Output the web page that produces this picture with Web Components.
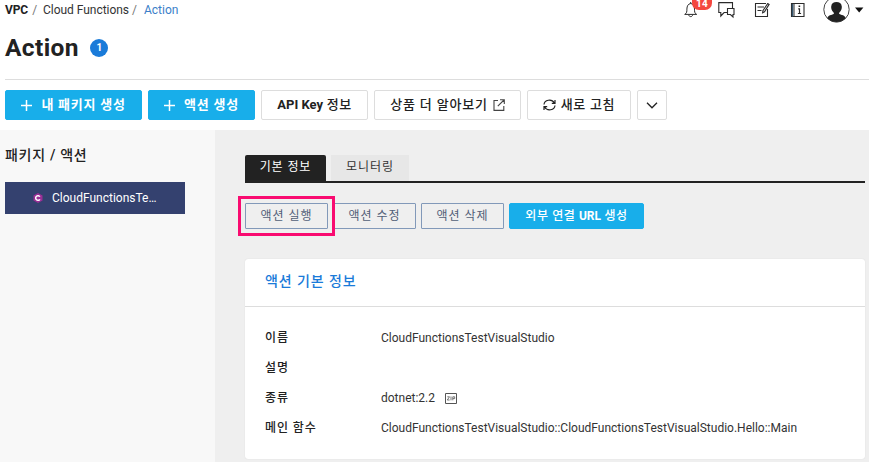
<!DOCTYPE html>
<html lang="ko">
<head>
<meta charset="utf-8">
<title>Action</title>
<style>
html,body{margin:0;height:100%;overflow:hidden;background:#fff}
body{font-family:Roboto,"Noto Sans CJK KR",sans-serif;font-size:12px;color:#222}
</style>
</head>
<body>
<console-page></console-page>
<script>
const define = (name, html) => {
  const tpl = document.createElement('template');
  tpl.innerHTML = html;
  customElements.define(name, class extends HTMLElement {
    constructor() {
      super();
      this.attachShadow({mode: 'open'}).append(tpl.content.cloneNode(true));
    }
  });
};

define('crumb-trail', `
<style>
:host{display:flex;align-items:center;height:20px;line-height:20px;white-space:pre;font-size:12px}
b{letter-spacing:-.1px}
i{font-style:normal;color:#777;margin:0 6px 0 4px}
.c{letter-spacing:-.04px;color:#333}
.c + i{margin-left:3px;margin-right:7px}
.a{color:#3b7fc9;letter-spacing:0}
</style><b>VPC</b><i>/</i><span class="c">Cloud Functions</span><i>/</i><span class="a">Action</span>`);

define('header-tools', `
<style>
:host{display:block;position:relative;width:185px;height:26px}
svg{display:block}
.n{position:absolute;left:8px;top:0;width:20px;height:10px;border-radius:0 0 7px 7px;background:#f4473f;color:#fff;font-weight:700;font-size:10px;line-height:8px;text-align:center;letter-spacing:.3px}
</style>
<svg width="185" height="26" fill="none" stroke="#2b2b2b" stroke-width="1.1">
<path d="M.700 14.400c2.200-1 2.200-3 2.200-5.300C2.900 6 4.200 3.800 6.700 3.500c2.500.3 3.800 2.500 3.800 5.600 0 2.300 0 4.300 2.200 5.300zM4.700 14.800c.3 2.400 3.700 2.400 4 0M6.700 3.500V2" stroke-width="1"/>
<path d="M48.500 8V2.600H34.800v9.900h2V16l3.300-3.500H43M43.500 8.500H50v6h-1V17l-2.600-2.500h-2.900z"/>
<path d="M82 3.500H71.500v13h12V9M73.500 7h6.500M73.500 10.500h4"/>
<path d="M83.600 3.600l1.500.8-4.600 7.400-1.900 1 .3-2.200z"/>
<path d="M107.500 3.500h12.500v13h-12.500z"/><path d="M110 3.500v13" stroke-width="1"/><path d="M108.500 4v12.500" stroke="#36566f" stroke-width="1.400"/>
<path d="M115.500 8.300v5.200M114.200 8.800h1.300M113.900 13.500h3.200" stroke-width="1.200"/><path d="M114.600 5.500h1.600v1.500h-1.600z" fill="#222" stroke="none"/>
<circle cx="152.500" cy="9.500" r="12.700" stroke="#444" stroke-width="1" fill="#fff"/>
<path d="M143.300 18.300c.5-3 4.500-3.200 6.400-4.200.4-.6.200-1.200-.3-1.800-1.700-1.800-2.400-3.800-2.200-5.900.3-3 2.500-4.300 5.300-4.300s5 1.300 5.300 4.300c.2 2.100-.5 4.100-2.200 5.900-.5.6-.7 1.200-.3 1.800 1.900 1 5.900 1.200 6.400 4.200-4.500 4.900-13.900 4.900-18.400 0z" fill="#222" stroke="none"/>
<path d="M171 7.500h8.400l-4.200 5z" fill="#111" stroke="none"/>
</svg><span class="n">14</span>`);

define('page-title', `
<style>
:host{display:flex;align-items:center;height:59px;border-bottom:1px solid #ddd;box-sizing:border-box}
h1{margin:0;font-size:24.5px;font-weight:700;line-height:30px;letter-spacing:.4px;padding-bottom:4px}
span{width:18px;height:18px;border-radius:50%;background:#1a7bd9;color:#fff;font:700 10px/18px Roboto,sans-serif;text-align:center;margin:0 0 4px 11.5px}
</style><h1><slot></slot></h1><span>1</span>`);

define('ui-button', `
<style>
:host{display:flex;align-items:center;justify-content:center;box-sizing:border-box;width:var(--w);height:30px;border:1px solid #ddd;border-radius:2px;background:#fff;color:#222;font-size:13px;font-weight:500;white-space:pre;letter-spacing:var(--ls,0);line-height:18px;flex:none}
:host([primary]){background:#18aeea;border-color:#18aeea;color:#fff;font-weight:700}
:host([small]){height:26px;font-size:12px;font-weight:500}
:host([line]){background:transparent;border-color:#8299b9;color:#526078;font-weight:400;border-radius:1px}
::slotted(svg){flex:none}
</style><slot></slot>`);

define('tab-bar', `
<style>
:host{display:flex;gap:5px;height:28px;box-sizing:border-box;border-bottom:2px solid #222;line-height:25px;font-size:12px;text-align:center}
span{width:78px;background:#e7e7e7;color:#333;letter-spacing:1px}
.on{width:81px;background:#222;color:#fff;border-radius:2px 2px 0 0;letter-spacing:.9px}
</style><span class="on">기본 정보</span><span>모니터링</span>`);

define('side-panel', `
<style>
:host{display:block;width:215px;box-sizing:border-box;padding:15px 5px;background:#f8f8f8;flex:none}
h2{margin:0 0 17px;font-size:14px;line-height:20px;font-weight:500;letter-spacing:.7px}
div{width:180px;height:32px;box-sizing:border-box;padding-left:28px;background:#34416f;color:#fff;display:flex;align-items:center;font-size:12px;gap:9px}
</style><h2>패키지 / 액션</h2>
<div><svg width="10" height="10" viewBox="0 0 10 10"><path d="M5 0l4.500 2.500v5L5 10 .500 7.500v-5z" fill="#9b2f96"/><path d="M6.900 3.700A2.300 2.300 0 1 0 6.900 6.300" fill="none" stroke="#fff" stroke-width="1.500"/></svg><span>CloudFunctionsTe…</span></div>`);

define('info-row', `
<style>
:host{display:flex;height:30px;align-items:center;line-height:20px}
.l{width:116px;font-size:12px;font-weight:500;letter-spacing:.9px}
.v{display:flex;align-items:center;gap:10px;color:#333}
</style><span class="l"><slot name="label"></slot></span><span class="v"><slot></slot></span>`);

define('info-card', `
<style>
:host{display:block;height:200px;box-sizing:border-box;background:#fff;border-radius:3px;box-shadow:0 0 1px #ccc}
h3{margin:0;padding:0 20px;height:48px;box-sizing:border-box;border-bottom:1px solid #ddd;color:#1a7bd9;font-size:14px;font-weight:500;line-height:45px;letter-spacing:.9px}
section{padding:16px 20px}
</style><h3><slot name="title"></slot></h3><section><slot></slot></section>`);

define('console-page', `
<style>
:host{display:flex;flex-direction:column;width:869px;height:462px;overflow:hidden}
header{height:130px;flex:none;padding-left:5px;box-sizing:border-box}
.top{display:flex;justify-content:space-between;height:21px}
.bar{display:flex;padding-top:10px}
.body{display:flex;flex:1}
main{flex:1;background:#efefef;padding:25px 4px 0 30px}
.acts{display:flex;gap:5px;margin:20px 0 30px;position:relative}
.mark{position:absolute;left:-7px;top:-7px;width:97px;height:40px;box-sizing:border-box;border:3px solid #f90b70}
</style>
<header>
<div class="top"><crumb-trail></crumb-trail><header-tools></header-tools></div>
<page-title>Action</page-title>
<div class="bar">
<ui-button primary style="--w:137px;margin-right:6px;--ls:.75px"><svg width="11" height="11" style="margin-right:9px"><path d="M5.500 0v11M0 5.500h11" stroke="#fff" stroke-width="1.500"/></svg>내 패키지 생성</ui-button>
<ui-button primary style="--w:107px;margin-right:6px;--ls:.75px"><svg width="11" height="11" style="margin-right:9px"><path d="M5.500 0v11M0 5.500h11" stroke="#fff" stroke-width="1.500"/></svg>액션 생성</ui-button>
<ui-button style="--w:107px;margin-right:6px;--ls:.5px"><b style="letter-spacing:0">API Key</b> 정보</ui-button>
<ui-button style="--w:147px;margin-right:6px;--ls:.8px">상품 더 알아보기<svg width="12" height="12" style="margin-left:5px" fill="none" stroke="#444" stroke-width="1.100"><path d="M5 1.500H1v9.900h9.800V7M7 .700h4.300V5M11 1L4.800 7.200"/></svg></ui-button>
<ui-button style="--w:104px;margin-right:6px;--ls:.7px"><svg width="13" height="12" style="margin-right:5px" fill="none" stroke="#222" stroke-width="1.200"><path d="M1 5.500C1.500 1 8.500-.800 11.400 4M12 1v3.300H8.800M12 6.500c-.5 4.500-7.500 6.300-10.400 1.500M1 11V7.700h3.200"/></svg>새로 고침</ui-button>
<ui-button style="--w:30px"><svg width="12" height="7" fill="none" stroke="#222" stroke-width="1.300"><path d="M1 .800l5 5 5-5"/></svg></ui-button>
</div>
</header>
<div class="body">
<side-panel></side-panel>
<main>
<tab-bar></tab-bar>
<div class="acts">
<ui-button small line style="--w:83px;--ls:1px">액션 실행</ui-button>
<ui-button small line style="--w:83px;--ls:1px">액션 수정</ui-button>
<ui-button small line style="--w:83px;--ls:1px">액션 삭제</ui-button>
<ui-button small primary style="--w:135px;--ls:.6px"><span>외부 연결 <b style="letter-spacing:-.1px">URL</b> 생성</span></ui-button>
<span class="mark"></span>
</div>
<info-card><span slot="title">액션 기본 정보</span>
<info-row><span slot="label">이름</span>CloudFunctionsTestVisualStudio</info-row>
<info-row><span slot="label">설명</span></info-row>
<info-row><span slot="label">종류</span>dotnet:2.2<svg width="12" height="11" fill="none" stroke="#555" stroke-width="1"><path d="M.500.500h11v10H.500z"/><path d="M2.300 3.800h2.200L2.300 7h2.300M6 3.500v3.800M7.800 7.300V3.800h1.900v1.800H7.800" stroke-width=".8"/></svg></info-row>
<info-row><span slot="label">메인 함수</span>CloudFunctionsTestVisualStudio::CloudFunctionsTestVisualStudio.Hello::Main</info-row>
</info-card>
</main>
</div>`);
</script>
</body>
</html>
